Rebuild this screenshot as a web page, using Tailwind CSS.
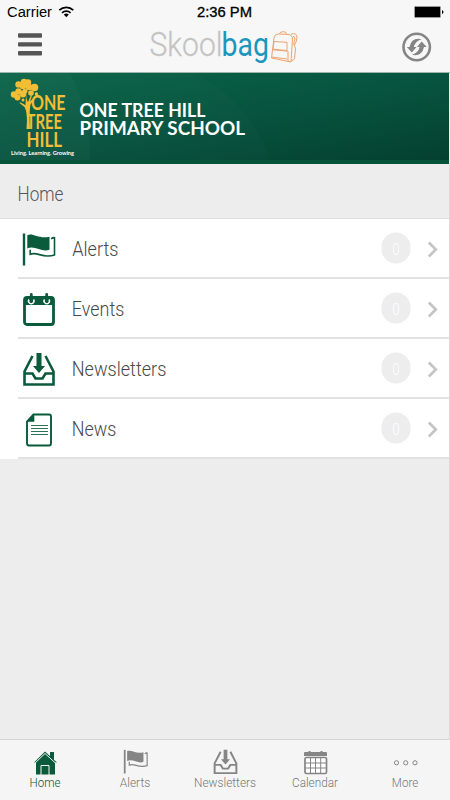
<!DOCTYPE html>
<html lang="en">
<head>
    <meta charset="UTF-8">
    <meta name="viewport" content="width=device-width, initial-scale=1.0">
    <title>Skoolbag</title>
    <script src="https://cdn.jsdelivr.net/npm/@tailwindcss/browser@4"></script>
</head>
<body class="bg-[#ededed] overflow-hidden font-['Roboto',sans-serif]">

<svg class="hidden">
    <symbol id="flag" viewBox="0 0 34 34">
        <path d="M.8.500h2.400v32H.8z" fill="currentColor"/>
        <path d="M5.300 2.200C11-.5 17 6.500 27.500 3.700V16.800C20 20 13 12 5.300 15.500z" fill="currentColor"/>
        <path d="M8.200 16.800v4.500C15.500 18 20 26 32.500 22V4.700c-1.300-.2-2.400.3-3.300 1.200" fill="none" stroke="currentColor" stroke-width="1.600"/>
    </symbol>
    <symbol id="tray" viewBox="0 0 32 34">
        <path d="M13.500 0h5v13H22l-6 7L10 13h3.500z" fill="currentColor"/>
        <path d="M9.500 3 1.500 18.500v13h29v-13L22.500 3M1 20.500h8.500l3 5h7l3-5H31" fill="none" stroke="currentColor" stroke-width="2.600"/>
    </symbol>
</svg>

<div class="w-[450px] h-[800px] flex flex-col">
    <!-- status bar -->
    <div class="h-6 shrink-0 bg-[#f7f7f7] flex">
        <svg class="w-[450px] h-6 font-['Liberation_Sans',sans-serif]" viewBox="0 0 450 24">
            <text x="7" y="17.300" font-size="14" textLength="45" lengthAdjust="spacingAndGlyphs">Carrier</text>
            <g fill="none" stroke="#000" stroke-width="1.700">
                <path d="M59.300 10.200a10 10 0 0 1 14 0M62 12.800a6.300 6.300 0 0 1 8.600 0"/>
            </g>
            <path d="M63.800 14.500a4 4 0 0 1 5 0L66.300 17.200z"/>
            <text x="197" y="17.300" font-size="14" stroke="#000" stroke-width=".3" textLength="55" lengthAdjust="spacingAndGlyphs">2:36 PM</text>
            <rect x="414.500" y="6.500" width="26" height="11" rx="1" fill="#000" stroke="#999"/>
            <path d="M442 10.300q1.500.3 1.500 1.800t-1.500 1.800z"/>
        </svg>
    </div>

    <!-- header -->
    <div class="h-[49px] shrink-0 bg-[#f7f7f7] flex items-start border-b border-[#9db5aa]">
        <svg class="w-[60px] h-12" viewBox="0 24 60 48">
            <g fill="#555">
                <rect x="18" y="33.300" width="24" height="4.400" rx="1"/>
                <rect x="18" y="42.200" width="24" height="4.400" rx="1"/>
                <rect x="18" y="51" width="24" height="4.400" rx="1"/>
            </g>
        </svg>
        <svg class="w-[160px] h-12 ml-[85px]" viewBox="145 24 160 48">
            <text x="149.500" y="56" font-size="34" font-weight="300" fill="#c3c3c3" stroke="#c3c3c3" stroke-width=".3" textLength="73" lengthAdjust="spacingAndGlyphs">Skool</text>
            <text x="221.500" y="56" font-size="34" font-weight="400" fill="#1b97bd" textLength="47.500" lengthAdjust="spacingAndGlyphs">bag</text>
            <g fill="none" stroke="#eda36c" stroke-width="1">
                <path d="M271.500 58 274 38q.5-4 4.500-4l9.500.4q4.500.4 4.500 4.600l-1.500 23L271.500 58zM279.500 34q.5-2.500 4-2.300 3 0 3.300 2.700M274 41.500l13 .8v8.200l-14-1.200zM273 49.800l15 1.400v9.800M272 57l15 2"/>
                <path d="M291 34.200q5.500-2 6 2.800-.2 5-2.500 8l1 4-1 10-3 2M293 36.500q2-.5 2 2.500l-1.500 6"/>
            </g>
        </svg>
        <svg class="w-[50px] h-12 ml-auto" viewBox="400 24 50 48">
            <circle cx="416.700" cy="47" r="13.200" fill="none" stroke="#858585" stroke-width="2.600"/>
            <g fill="#858585">
                <path d="M421.500 39.200q-10-2-12 7.800h-2.700l5 5.500 4.800-5.500h-2.700q1-5.500 7.600-7.800z"/>
                <path d="M412 54.800q10 2 12-7.800h2.700l-5-5.500-4.800 5.500h2.700q-1 5.500-7.600 7.800z"/>
            </g>
        </svg>
    </div>

    <!-- school banner -->
    <div class="h-[91px] shrink-0 w-[449px] bg-linear-170 from-[#0a6548] via-[#075440] to-[#04402f] border-b-4 border-[#055239]">
        <svg class="w-[449px] h-[91px]" viewBox="0 73 449 91">
            <path d="M0 73h70q22 42 20 87H0z" fill="#fff" opacity=".025"/>
            <path d="M0 73h195q55 30 75 87H0z" fill="#fff" opacity=".015"/>
            <g fill="#f3bd36">
                <circle cx="18.500" cy="84.500" r="3.200"/><circle cx="24" cy="82" r="3.300"/><circle cx="28" cy="82.500" r="3.200"/>
                <circle cx="23" cy="86" r="3.200"/><circle cx="29" cy="87" r="3.200"/><circle cx="34.500" cy="87.500" r="3.800"/>
                <circle cx="14" cy="94.500" r="3.200"/><circle cx="18.500" cy="91.500" r="3.200"/><circle cx="23" cy="94" r="3.400"/>
                <circle cx="17.500" cy="97.500" r="3"/><circle cx="25" cy="91" r="2.500"/>
                <circle cx="31" cy="93" r="2.800"/><circle cx="36.500" cy="94" r="1.700"/><circle cx="23" cy="100" r="1.500"/>
                <path d="M26 94.500q.5 6 2 7.500l3-7 1 .5-2 6 5-5 .6.600-5.100 7.400q-1.500 8-.5 24.500h-3.500q1.500-17-2-22l-5-4 .5-.8q3.500 1.300 5.500 3z"/>
            </g>
            <g fill="#f3bd36" font-size="20" class="font-['Lato',sans-serif]" font-weight="700">
                <text x="31" y="110" textLength="34.500" lengthAdjust="spacingAndGlyphs">ONE</text>
                <text x="26.500" y="128.500" textLength="35.500" lengthAdjust="spacingAndGlyphs">TREE</text>
                <text x="26.500" y="147" textLength="35.500" lengthAdjust="spacingAndGlyphs">HILL</text>
            </g>
            <text x="11" y="155.300" font-size="6" font-weight="700" fill="#fff" class="font-['Lato',sans-serif]" textLength="63" lengthAdjust="spacingAndGlyphs">Living. Learning. Growing</text>
            <g fill="#fff" font-size="19.500" font-weight="700" class="font-['Lato',sans-serif]">
                <text x="79.500" y="116.500" textLength="126" lengthAdjust="spacingAndGlyphs">ONE TREE HILL</text>
                <text x="79.500" y="134.500" textLength="165.500" lengthAdjust="spacingAndGlyphs">PRIMARY SCHOOL</text>
            </g>
        </svg>
    </div>

    <div class="flex-1 flex flex-col border-r border-[#d9d9d9]">
        <div class="h-[55px] border-b border-[#dcdcdc]">
            <svg class="w-[200px] h-[54px]" viewBox="0 0 200 54">
                <text x="17.500" y="36.800" font-size="19.500" font-weight="300" fill="#555" textLength="46" lengthAdjust="spacingAndGlyphs">Home</text>
            </svg>
        </div>

        <!-- menu rows -->
        <div class="h-[60px] bg-white pl-[18px]">
            <div class="h-full border-b-2 border-[#e2e2e2] flex items-center justify-between">
                <svg class="w-[34px] h-[34px] ml-1 mt-1 text-[#0a5a3c]"><use href="#flag"/></svg>
                <svg class="w-[130px] h-[58px] ml-[15px] mr-auto" viewBox="71 0 130 58">
                    <text x="72.300" y="36.800" font-size="19.500" font-weight="300" fill="#484848" textLength="46" lengthAdjust="spacingAndGlyphs">Alerts</text>
                </svg>
                <svg class="w-[70px] h-[58px]" viewBox="379 0 70 58"><rect x="381.500" y="13.500" width="29" height="31" rx="14.500" fill="#ededed"/><text x="396" y="35.500" text-anchor="middle" font-size="17" font-weight="300" fill="#fff" textLength="7.500" lengthAdjust="spacingAndGlyphs">0</text><path d="m428.800 23.500 7 7-7 7" fill="none" stroke="#c5c5c5" stroke-width="2.700"/></svg>
            </div>
        </div>
        <div class="h-[60px] bg-white pl-[18px]">
            <div class="h-full border-b-2 border-[#e2e2e2] flex items-center justify-between">
                <svg class="w-[34px] h-[34px] ml-1 mt-1 text-[#0a5a3c]" viewBox="0 0 34 34">
                    <rect x="2.500" y="4.500" width="29" height="27" rx="2.500" fill="none" stroke="currentColor" stroke-width="2.800"/>
                    <path d="M2 4h30v8H2z" fill="currentColor"/>
                    <g fill="none" stroke="#fff" stroke-width="1.500"><path d="M7 6.500a2.700 2.700 0 1 0 4.500 0M22.500 6.500a2.700 2.700 0 1 0 4.500 0"/></g>
                    <path d="M9.300 1.500v5M24.700 1.500v5" stroke="currentColor" stroke-width="2.800" stroke-linecap="round"/>
                </svg>
                <svg class="w-[130px] h-[58px] ml-[15px] mr-auto" viewBox="71 0 130 58">
                    <text x="71.800" y="36.800" font-size="19.500" font-weight="300" fill="#484848" textLength="52.500" lengthAdjust="spacingAndGlyphs">Events</text>
                </svg>
                <svg class="w-[70px] h-[58px]" viewBox="379 0 70 58"><rect x="381.500" y="13.500" width="29" height="31" rx="14.500" fill="#ededed"/><text x="396" y="35.500" text-anchor="middle" font-size="17" font-weight="300" fill="#fff" textLength="7.500" lengthAdjust="spacingAndGlyphs">0</text><path d="m428.800 23.500 7 7-7 7" fill="none" stroke="#c5c5c5" stroke-width="2.700"/></svg>
            </div>
        </div>
        <div class="h-[60px] bg-white pl-[18px]">
            <div class="h-full border-b-2 border-[#e2e2e2] flex items-center justify-between">
                <svg class="w-[34px] h-[34px] ml-1 mt-1 text-[#0a5a3c]"><use href="#tray"/></svg>
                <svg class="w-[130px] h-[58px] ml-[15px] mr-auto" viewBox="71 0 130 58">
                    <text x="71.800" y="36.800" font-size="19.500" font-weight="300" fill="#484848" textLength="94.500" lengthAdjust="spacingAndGlyphs">Newsletters</text>
                </svg>
                <svg class="w-[70px] h-[58px]" viewBox="379 0 70 58"><rect x="381.500" y="13.500" width="29" height="31" rx="14.500" fill="#ededed"/><text x="396" y="35.500" text-anchor="middle" font-size="17" font-weight="300" fill="#fff" textLength="7.500" lengthAdjust="spacingAndGlyphs">0</text><path d="m428.800 23.500 7 7-7 7" fill="none" stroke="#c5c5c5" stroke-width="2.700"/></svg>
            </div>
        </div>
        <div class="h-[60px] bg-white pl-[18px]">
            <div class="h-full border-b-2 border-[#e2e2e2] flex items-center justify-between">
                <svg class="w-[34px] h-[34px] ml-1 mt-1 text-[#0a5a3c]" viewBox="0 0 34 34">
                    <path d="M11.500 1.500H27q2 0 2 2v27q0 2-2 2H7q-2 0-2-2V8.500z" fill="none" stroke="currentColor" stroke-width="1.900"/>
                    <path d="M12.300 1.500v7.300H5z" fill="currentColor"/>
                    <path d="M9 12.500h17M9 15.500h17M9 18.500h17M9 21.500h17" stroke="currentColor" opacity=".85"/>
                </svg>
                <svg class="w-[130px] h-[58px] ml-[15px] mr-auto" viewBox="71 0 130 58">
                    <text x="71.800" y="36.800" font-size="19.500" font-weight="300" fill="#484848" textLength="44.500" lengthAdjust="spacingAndGlyphs">News</text>
                </svg>
                <svg class="w-[70px] h-[58px]" viewBox="379 0 70 58"><rect x="381.500" y="13.500" width="29" height="31" rx="14.500" fill="#ededed"/><text x="396" y="35.500" text-anchor="middle" font-size="17" font-weight="300" fill="#fff" textLength="7.500" lengthAdjust="spacingAndGlyphs">0</text><path d="m428.800 23.500 7 7-7 7" fill="none" stroke="#c5c5c5" stroke-width="2.700"/></svg>
            </div>
        </div>
    </div>

    <!-- tab bar -->
    <div class="h-[61px] shrink-0 bg-[#f5f5f5] border-t border-[#d4d4d4] grid grid-cols-5 text-[#858585]">
        <svg class="w-[90px] h-[60px] text-[#0a5a3c]" viewBox="0 740 90 60">
            <path d="M50 752h4v9l-4-4zM45 753l10 10v11.500H36V763zM34 762.500l11-11 12 11" fill="currentColor"/>
            <path d="m34 764 11-10.500L56.500 764" fill="none" stroke="#f5f5f5"/>
            <path d="M41 775v-9.500h8v9.500" fill="none" stroke="#f5f5f5"/>
            <text x="29.500" y="787.300" font-size="13.500" font-weight="300" fill="#0a5a3c" textLength="31" lengthAdjust="spacingAndGlyphs">Home</text>
        </svg>
        <svg class="w-[90px] h-[60px]" viewBox="90 740 90 60">
            <use href="#flag" x="123" y="749.500" width="25.500" height="25"/>
            <text x="119.800" y="787.300" font-size="13.500" font-weight="300" fill="#777" textLength="30.500" lengthAdjust="spacingAndGlyphs">Alerts</text>
        </svg>
        <svg class="w-[90px] h-[60px]" viewBox="180 740 90 60">
            <use href="#tray" x="213" y="749.500" width="25" height="25.500"/>
            <text x="194" y="787.300" font-size="13.500" font-weight="300" fill="#777" textLength="62" lengthAdjust="spacingAndGlyphs">Newsletters</text>
        </svg>
        <svg class="w-[90px] h-[60px]" viewBox="270 740 90 60">
            <path d="M304 753q0-1 1-1h21q1 0 1 1v3h-23z" fill="currentColor"/>
            <path d="M309.500 751v3M321.500 751v3" stroke="currentColor" stroke-width="2"/>
            <rect x="305" y="757.500" width="21.500" height="16" rx="1.500" fill="#fff" stroke="currentColor" stroke-width="1.700"/>
            <path d="M310.500 757v17M315.500 757v17M320.700 757v17M305 763h22M305 768h22" stroke="currentColor"/>
            <text x="292" y="787.300" font-size="13.500" font-weight="300" fill="#777" textLength="46" lengthAdjust="spacingAndGlyphs">Calendar</text>
        </svg>
        <svg class="w-[90px] h-[60px]" viewBox="360 740 90 60">
            <g fill="none" stroke="currentColor"><circle cx="396.500" cy="762.800" r="2.100"/><circle cx="405.700" cy="762.800" r="2.100"/><circle cx="415" cy="762.800" r="2.100"/></g>
            <text x="391.800" y="787.300" font-size="13.500" font-weight="300" fill="#777" textLength="26.500" lengthAdjust="spacingAndGlyphs">More</text>
        </svg>
    </div>
</div>

</body>
</html>
